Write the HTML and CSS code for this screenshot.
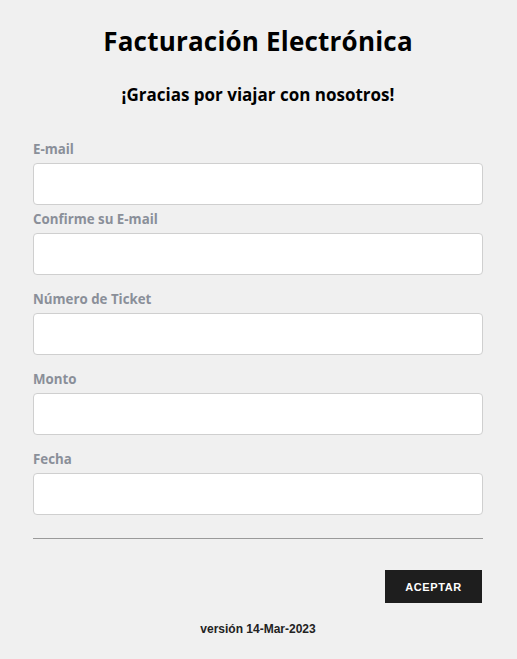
FILE: index.html
```html
<!DOCTYPE html>
<html lang="es">
<head>
    <meta charset="UTF-8">
    <meta name="viewport" content="width=device-width, initial-scale=1.0">
    <title>Facturación Electrónica</title>
    <link rel="stylesheet" href="styles.css">
</head>
<body>
    <!-- Formulario -->
    <div class="form-container">
        <h1 class="title">Facturación Electrónica</h1>
        <h2 class="subtitle">¡Gracias por viajar con nosotros!</h2>

        <form class="invoice-form">
            <div class="field field-first">
                <label for="email">E-mail</label>
                <input type="email" id="email">
            </div>
            <div class="field">
                <label for="email2">Confirme su E-mail</label>
                <input type="email" id="email2">
            </div>
            <div class="field">
                <label for="ticket">Número de Ticket</label>
                <input type="text" id="ticket">
            </div>
            <div class="field">
                <label for="monto">Monto</label>
                <input type="text" id="monto">
            </div>
            <div class="field">
                <label for="fecha">Fecha</label>
                <input type="text" id="fecha">
            </div>

            <hr class="divider">

            <div class="actions">
                <button type="button" class="btn-accept">ACEPTAR</button>
            </div>
        </form>

        <p class="version">versión 14-Mar-2023</p>
    </div>
</body>
</html>
```

FILE: styles.css
```css
/* Reset and Base Styles */
* {
    margin: 0;
    padding: 0;
    box-sizing: border-box;
}

body {
    font-family: "Open Sans", "Noto Sans", sans-serif;
    background: #f0f0f0;
    color: #000;
    padding: 0 34px 0 33px;
}

/* Container */
.form-container {
    width: 450px;
    padding-top: 24px;
}

.title {
    font-size: 26px;
    font-weight: 700;
    text-align: center;
    line-height: 34px;
    letter-spacing: 0.2px;
}

.subtitle {
    font-size: 17px;
    font-weight: 700;
    text-align: center;
    line-height: 24px;
    margin-top: 25px;
    margin-bottom: 32px;
}

/* Fields */
.field {
    display: flex;
    flex-direction: column;
    gap: 4px;
    margin-top: 14px;
}

.field-first {
    margin-top: 0;
}

.field-first + .field {
    margin-top: 4px;
}

.field label {
    font-size: 13.3px;
    font-weight: 700;
    line-height: 20px;
    color: #8a8f99;
}

.field input {
    width: 100%;
    height: 42px;
    background: #fff;
    border: 1px solid #cfcfcf;
    border-radius: 4px;
    padding: 6px 12px;
    font-size: 14px;
}

/* Divider and Button */
.divider {
    border: none;
    border-top: 1px solid #9a9a9a;
    margin-top: 23px;
}

.actions {
    display: flex;
    justify-content: flex-end;
    margin-top: 31px;
    padding-right: 1px;
}

.btn-accept {
    width: 97px;
    height: 33px;
    background: #1e1e1e;
    color: #fff;
    border: none;
    font-family: "Liberation Sans", Arial, sans-serif;
    font-size: 11px;
    font-weight: 700;
    letter-spacing: 0.6px;
}

.version {
    font-family: "Liberation Sans", Arial, sans-serif;
    font-size: 12px;
    font-weight: 700;
    text-align: center;
    color: #222;
    margin-top: 19px;
}
```
